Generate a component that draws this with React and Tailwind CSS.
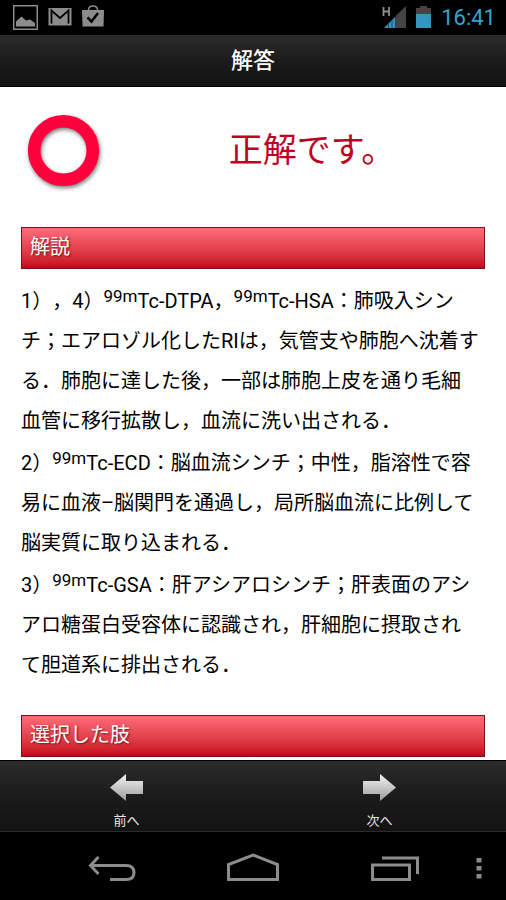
import React from 'react'

const notes = [
  {
    id: 1,
    body: (
      <>
        1），4）<Tc />Tc-DTPA，<Tc />Tc-HSA：肺吸入シン<br />
        チ；エアロゾル化したRIは，気管支や肺胞へ沈着す<br />
        る．肺胞に達した後，一部は肺胞上皮を通り毛細<br />
        血管に移行拡散し，血流に洗い出される．
      </>
    ),
  },
  {
    id: 2,
    body: (
      <>
        2）<Tc />Tc-ECD：脳血流シンチ；中性，脂溶性で容<br />
        易に血液–脳関門を通過し，局所脳血流に比例して<br />
        脳実質に取り込まれる．
      </>
    ),
  },
  {
    id: 3,
    body: (
      <>
        3）<Tc />Tc-GSA：肝アシアロシンチ；肝表面のアシ<br />
        アロ糖蛋白受容体に認識され，肝細胞に摂取され<br />
        て胆道系に排出される．
      </>
    ),
  },
]

function Tc() {
  return <sup className="-top-[6px] text-[17px] leading-none">99m</sup>
}

const StatusBar = () => {
  return (
    <div className="flex h-[35px] items-center justify-between bg-black pl-[13px] pr-[10px]">
      <div className="flex items-center gap-[10px] text-[#8c8c8c]">
        <svg width="25" height="25" viewBox="0 0 25 25" fill="none">
          <rect x="0.75" y="0.75" width="23.5" height="23.5" stroke="currentColor" strokeWidth="1.5" />
          <path d="M3 21.500V16.500L8.500 11.500L13 15.500L17 14.500L22 18V21.500Z" fill="currentColor" />
        </svg>
        <svg width="24" height="25" viewBox="0 0 24 25" fill="none">
          <rect x="0.500" y="3" width="23" height="17.500" fill="currentColor" />
          <path d="M3.500 18.500V5.500L12 13L20.500 5.500V18.500" stroke="#000" strokeWidth="1.800" />
        </svg>
        <svg width="24" height="25" viewBox="0 0 24 25" fill="none">
          <path d="M6.500 5.500V4.500Q7 1 11 1Q15 1 15.500 4.500V5.500" stroke="currentColor" strokeWidth="1.500" />
          <path d="M0 5H22L21.500 21.500H0.500Z" fill="currentColor" />
          <path d="M5.500 12.500L9.500 16.500L16 8" stroke="#000" strokeWidth="2.500" />
        </svg>
      </div>
      <div className="flex items-center gap-[10px]">
        <svg width="24" height="23" viewBox="0 0 24 23">
          <path d="M1.500 1V10M7 1V10M1.500 5.500H7" stroke="#8c8c8c" strokeWidth="1.800" fill="none" />
          <path d="M24 0V22H14V9.500Z" fill="#444" />
          <path d="M13.500 10.500V22H2Z" fill="#3396bf" />
          <path d="M6.500 17V22M10 14V22" stroke="#16506a" strokeWidth="1" />
        </svg>
        <svg width="15" height="23" viewBox="0 0 15 23">
          <path d="M4 0H11V2H15V8H0V2H4Z" fill="#444" />
          <rect y="8" width="15" height="14" fill="#3396bf" />
        </svg>
        <span className="text-[22px] leading-none text-[#33a5d2]">16:41</span>
      </div>
    </div>
  )
}

const SectionTitle = ({ children }) => (
  <h2 className="h-[42px] border border-[#7c0f1c] bg-linear-to-b from-[#ff6b7b] to-[#c60019] px-2 text-xl leading-[38px] text-white [text-shadow:1px_1px_2px_#7c0f1c]">
    {children}
  </h2>
)

const Arrow = ({ flip = false }) => (
  <svg width="33" height="27" viewBox="0 0 33 27" className={flip ? 'rotate-180' : ''}>
    <defs>
      <linearGradient id={flip ? 'arrowNext' : 'arrowPrev'} x1="0" y1={flip ? '1' : '0'} x2="0" y2={flip ? '0' : '1'}>
        <stop offset="0" stopColor="#f4f4f4" />
        <stop offset="1" stopColor="#9b9b9b" />
      </linearGradient>
    </defs>
    <path d="M0 13.500L16 0V7H33V20H16V27Z" fill={flip ? 'url(#arrowNext)' : 'url(#arrowPrev)'} />
  </svg>
)

const TabBar = () => {
  return (
    <nav className="flex border-t border-b border-t-black border-b-[#2b2b2b] bg-linear-to-b from-[#2c2c2c] via-[#1b1b1b] to-[#131313]">
      <button type="button" className="flex flex-1 flex-col items-center pt-[13px] text-[13px] text-[#e6e6e6]">
        <Arrow />
        <span className="mt-[10px] leading-5">前へ</span>
      </button>
      <button type="button" className="flex flex-1 flex-col items-center pt-[13px] text-[13px] text-[#e6e6e6]">
        <Arrow flip />
        <span className="mt-[10px] leading-5">次へ</span>
      </button>
    </nav>
  )
}

const SystemNav = () => {
  return (
    <div className="grid h-[68px] grid-cols-[1fr_56px_1fr] items-center bg-black px-6 pt-1 text-[#8c8c8c]">
      <button type="button" aria-label="戻る" className="ml-16 justify-self-start">
        <svg width="48" height="30" viewBox="0 0 48 30" fill="none" stroke="currentColor" strokeWidth="3">
          <path d="M10.500 4L2.500 12.500L10.500 21M2.500 12.500H38Q46 12.500 46 19.500Q46 26.500 38 26.500H22" />
        </svg>
      </button>
      <button type="button" aria-label="ホーム" className="justify-self-center">
        <svg width="54" height="30" viewBox="0 0 54 30" fill="none" stroke="currentColor" strokeWidth="3">
          <path d="M2.500 26.500V11.500L27 2L51.500 11.500V26.500Z" />
        </svg>
      </button>
      <div className="flex items-center justify-between pl-[90px]">
        <button type="button" aria-label="最近使ったアプリ">
          <svg width="48" height="30" viewBox="0 0 48 30" fill="none" stroke="currentColor" strokeWidth="3">
            <rect x="1.500" y="12" width="37" height="14.500" />
            <path d="M11 5H46.500V21" />
          </svg>
        </button>
        <button type="button" aria-label="メニュー">
          <svg width="6" height="30" viewBox="0 0 6 30" fill="currentColor">
            <rect x="0.500" y="5" width="5" height="4.500" />
            <rect x="0.500" y="13" width="5" height="4.500" />
            <rect x="0.500" y="21" width="5" height="4.500" />
          </svg>
        </button>
      </div>
    </div>
  )
}

const App = () => {
  return (
    <div lang="ja" className="flex min-h-screen flex-col bg-white font-[Roboto,'Noto_Sans_CJK_JP',sans-serif] text-black [text-spacing-trim:space-all]">
      <StatusBar />
      <header className="border-b border-black bg-linear-to-b from-[#2c2c2c] via-[#1b1b1b] to-[#131313] py-2 text-center">
        <h1 className="text-[22px] leading-[35px] font-medium text-white">解答</h1>
      </header>

      <main className="flex flex-1 flex-col px-[21px] pt-[23px] pb-[3px]">
        {/* Result */}
        <div className="flex items-center">
          <div className="w-[118px] shrink-0 pl-[7px]">
            <svg width="80" height="80" viewBox="0 0 80 80" className="[filter:drop-shadow(1px_2px_2px_#0008)]">
              <circle cx="35.500" cy="40.500" r="29.300" fill="none" stroke="#ff003c" strokeWidth="12.600" />
            </svg>
          </div>
          <p className="flex-1 text-center text-[34px] leading-[72px] text-[#bf0022]">正解です。</p>
        </div>

        <section className="mt-[37px]">
          <SectionTitle>解説</SectionTitle>
          <div className="mt-3 flex flex-col gap-0.5 text-xl leading-10 whitespace-nowrap">
            {notes.map((note) => (
              <p key={note.id}>{note.body}</p>
            ))}
          </div>
        </section>

        <section className="mt-auto">
          <SectionTitle>選択した肢</SectionTitle>
        </section>
      </main>

      <TabBar />
      <SystemNav />
    </div>
  )
}

export default App
